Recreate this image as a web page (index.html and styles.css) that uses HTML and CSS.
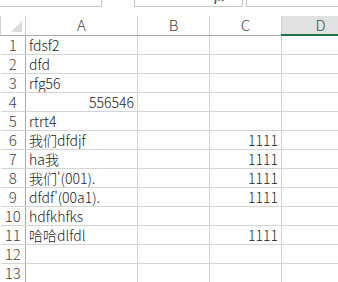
FILE: index.html
```html
<!DOCTYPE html>
<html lang="zh">
<head>
    <meta charset="UTF-8">
    <title>Sheet1</title>
    <link rel="stylesheet" href="styles.css">
</head>
<body>
    <div class="toolbar">
        <div class="name-box"></div>
        <div class="fx-box"><span class="tick">⋮</span><span class="tick">✓</span><span class="fx">fx</span></div>
        <div class="formula"></div>
    </div>
    <table class="sheet">
        <colgroup>
            <col class="c-head">
            <col class="c-a">
            <col class="c-b">
            <col class="c-c">
            <col>
        </colgroup>
        <thead>
            <tr>
                <th class="corner"><span class="tri"></span></th>
                <th>A</th>
                <th>B</th>
                <th>C</th>
                <th class="active">D</th>
            </tr>
        </thead>
        <tbody>
            <tr><th>1</th><td>fdsf2</td><td></td><td></td><td></td></tr>
            <tr><th>2</th><td>dfd</td><td></td><td></td><td></td></tr>
            <tr><th>3</th><td>rfg56</td><td></td><td></td><td></td></tr>
            <tr><th>4</th><td class="num">556546</td><td></td><td></td><td></td></tr>
            <tr><th>5</th><td>rtrt4</td><td></td><td></td><td></td></tr>
            <tr><th>6</th><td>我们dfdjf</td><td></td><td class="num">1111</td><td></td></tr>
            <tr><th>7</th><td>ha我</td><td></td><td class="num">1111</td><td></td></tr>
            <tr><th>8</th><td>我们'(001).</td><td></td><td class="num">1111</td><td></td></tr>
            <tr><th>9</th><td>dfdf'(00a1).</td><td></td><td class="num">1111</td><td></td></tr>
            <tr><th>10</th><td>hdfkhfks</td><td></td><td></td><td></td></tr>
            <tr><th>11</th><td>哈哈dlfdl</td><td></td><td class="num">1111</td><td></td></tr>
            <tr><th>12</th><td></td><td></td><td></td><td></td></tr>
            <tr><th>13</th><td></td><td></td><td></td><td></td></tr>
        </tbody>
    </table>
</body>
</html>
```
FILE: styles.css
```css
body {
    margin: 0;
    background-color: #fff;
    font-family: "Noto Sans CJK SC", "DejaVu Sans", sans-serif;
    color: #222;
    overflow: hidden;
}

.toolbar {
    display: flex;
    height: 7px;
    margin-bottom: 9px;
}

.name-box {
    width: 101px;
    border-right: 1px solid #c6c6c6;
    border-bottom: 1px solid #c6c6c6;
}

.fx-box {
    width: 107px;
    margin-left: 32px;
    border-left: 1px solid #c6c6c6;
    border-right: 1px solid #c6c6c6;
    border-bottom: 1px solid #c6c6c6;
    display: flex;
    align-items: flex-end;
    overflow: hidden;
    font-size: 12px;
    line-height: 12px;
    color: #555;
}

.tick {
    margin-left: 12px;
    margin-bottom: 4px;
    font-size: 9px;
}

.tick + .tick {
    margin-left: 28px;
}

.fx {
    margin-left: 24px;
    margin-bottom: 3px;
    font-style: italic;
    font-weight: bold;
    font-family: "Liberation Serif", serif;
}

.formula {
    flex: 1;
    margin-left: 3px;
    border-left: 1px solid #c6c6c6;
    border-bottom: 1px solid #c6c6c6;
}

.sheet {
    border-collapse: collapse;
    table-layout: fixed;
    width: 360px;
    font-size: 14px;
    font-weight: 300;
}

.c-head { width: 25px; }
.c-a { width: 112px; }
.c-b { width: 72px; }
.c-c { width: 72px; }

.sheet th,
.sheet td {
    height: 18px;
    padding: 0 3px;
    border: 1px solid #d4d4d4;
    line-height: 18px;
    white-space: nowrap;
    overflow: hidden;
}

.sheet thead th {
    height: 18px;
    font-weight: 300;
    color: #444;
    border-top: none;
    border-bottom: 1px solid #ababab;
    font-size: 15px;
}

.sheet thead th.active {
    background-color: #e1e1e1;
    color: #2f5a43;
    border-bottom: 2px solid #217346;
}

.sheet tbody th {
    font-weight: 300;
    color: #444;
    font-size: 15px;
    padding: 0;
    border-left: none;
    border-right: 1px solid #ababab;
    text-align: center;
}

.corner {
    position: relative;
    border-left: none;
}

.tri {
    position: absolute;
    right: 3px;
    bottom: 3px;
    width: 0;
    height: 0;
    border-left: 11px solid transparent;
    border-bottom: 11px solid #dcdcdc;
}

.sheet td {
    text-align: left;
}

.sheet td.num {
    text-align: right;
}
```
